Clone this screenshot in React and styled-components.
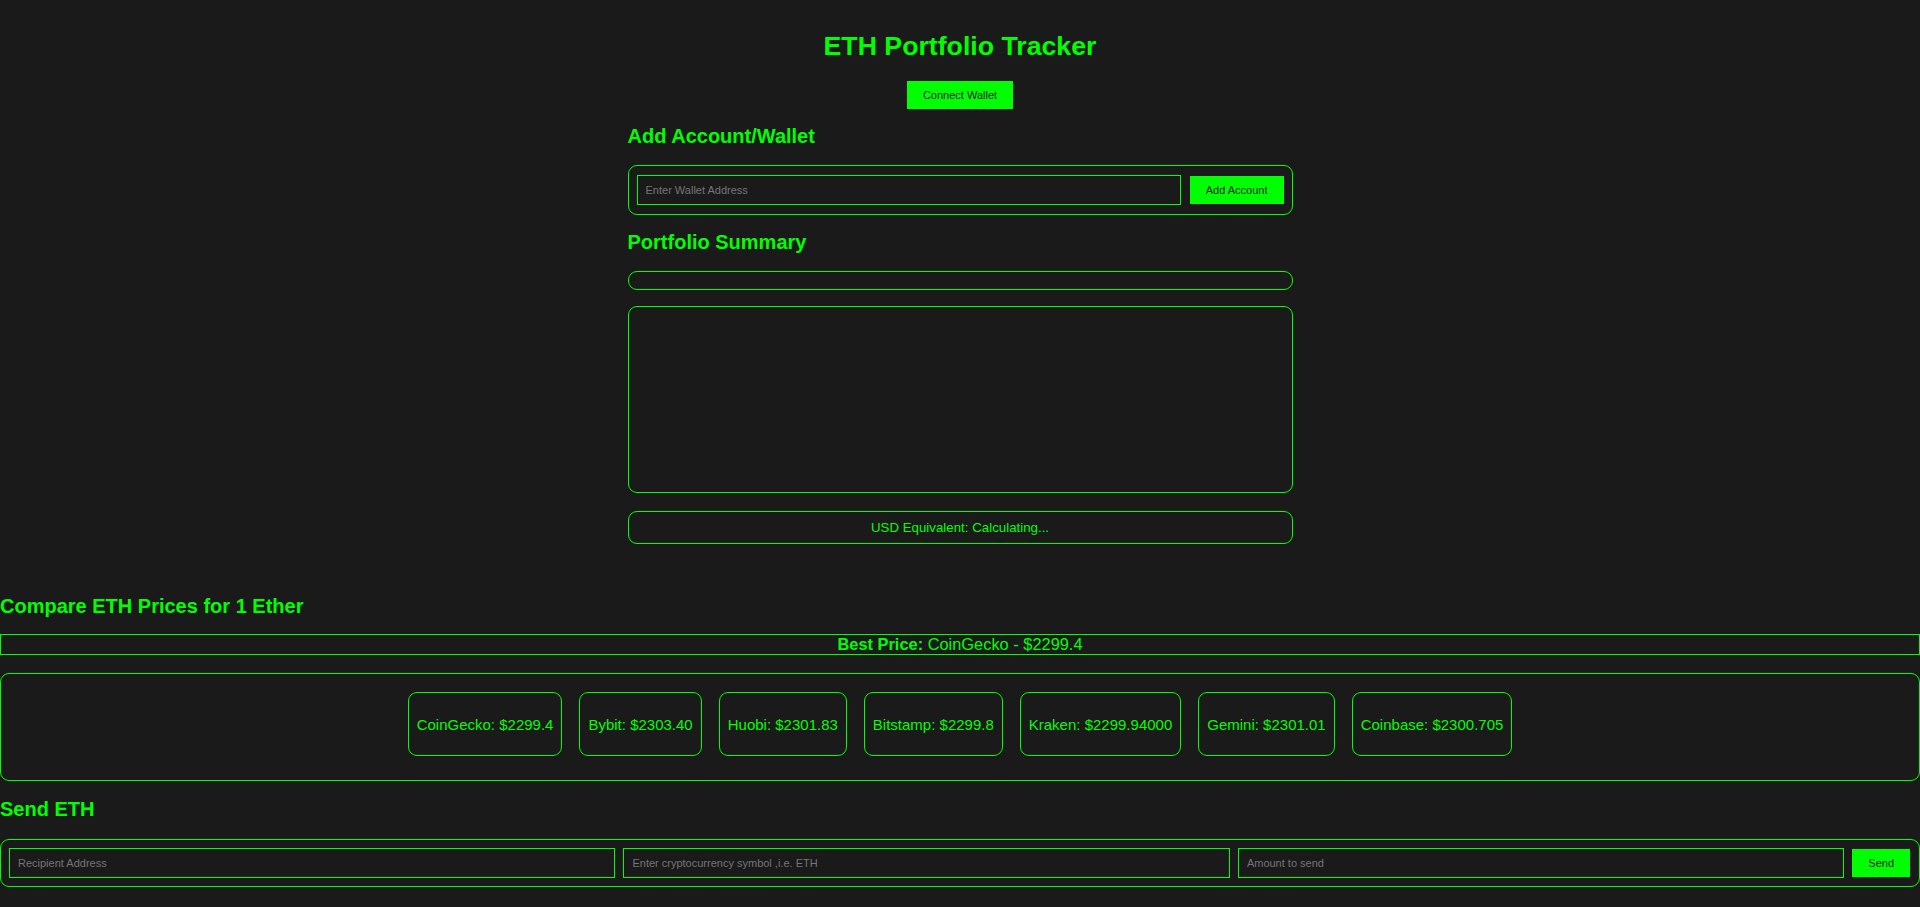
import React from 'react';
import styled, { createGlobalStyle } from 'styled-components';

const GlobalStyle = createGlobalStyle`
  body {
    margin: 0;
    background-color: #1a1a1a;
    color: #00ff00;
    font-family: "Liberation Sans", Arial, sans-serif;
  }
`;

const Page = styled.div`
  min-height: 907px;
  padding-top: 31px;
  box-sizing: border-box;
`;

const Container = styled.div`
  width: 665px;
  margin: 0 auto;
  display: flex;
  flex-direction: column;
`;

const Title = styled.h1`
  margin: 0;
  font-size: 26.7px;
  line-height: 30px;
  text-align: center;
`;

const GreenButton = styled.button`
  background-color: #00ff00;
  color: #1a1a1a;
  border: none;
  font-family: "Liberation Sans", Arial, sans-serif;
  font-size: 11px;
  height: 28px;
  padding: 0 16px;
  cursor: pointer;
  flex-shrink: 0;
`;

const ConnectButton = styled(GreenButton)`
  align-self: center;
  margin-top: 20px;
`;

const Heading = styled.h2`
  margin: ${(p) => p.$top || 16}px 0 ${(p) => p.$bottom || 17}px;
  font-size: 20px;
  line-height: 23px;
  font-weight: bold;
`;

const Card = styled.div`
  border: 1px solid #00ff00;
  border-radius: 9px;
  box-sizing: border-box;
  min-height: ${(p) => p.$height || 0}px;
  margin-bottom: ${(p) => p.$gap || 0}px;
`;

const InputRow = styled.div`
  display: flex;
  align-items: center;
  gap: 9px;
  padding: 9px 8px;
  border: 1px solid #00ff00;
  border-radius: 9px;
`;

const TextInput = styled.input`
  flex: 1;
  min-width: 0;
  height: 30px;
  box-sizing: border-box;
  background: #1a1a1a;
  border: 1px solid #00ff00;
  color: #00ff00;
  padding: 0 8px;
  font-family: "Liberation Sans", Arial, sans-serif;
  font-size: 11px;
  outline: none;
  &::placeholder {
    color: #757575;
  }
`;

const UsdCard = styled.div`
  border: 1px solid #00ff00;
  border-radius: 9px;
  padding: 8px;
  text-align: center;
  font-size: 13.3px;
  line-height: 15px;
`;

const BestPrice = styled.div`
  border: 1px solid #00ff00;
  text-align: center;
  font-size: 16.4px;
  line-height: 19px;
  margin-bottom: 18px;
`;

const PriceList = styled.div`
  display: flex;
  justify-content: center;
  gap: 17px;
  padding: 18px 10px 24px;
  border: 1px solid #00ff00;
  border-radius: 9px;
`;

const PriceCard = styled.div`
  height: 64px;
  box-sizing: border-box;
  display: flex;
  align-items: center;
  padding: 0 8px;
  border: 1px solid #00ff00;
  border-radius: 9px;
  font-size: 15px;
`;

const SendRow = styled(InputRow)`
  gap: 8px;
  padding: 8px 9px 8px 8px;
`;

const prices = [
  { name: 'CoinGecko', price: '2299.4' },
  { name: 'Bybit', price: '2303.40' },
  { name: 'Huobi', price: '2301.83' },
  { name: 'Bitstamp', price: '2299.8' },
  { name: 'Kraken', price: '2299.94000' },
  { name: 'Gemini', price: '2301.01' },
  { name: 'Coinbase', price: '2300.705' },
];

function App() {
  return (
    <Page>
      <GlobalStyle />
      <Container>
        <Title>ETH Portfolio Tracker</Title>
        <ConnectButton>Connect Wallet</ConnectButton>
        <Heading $top={16} $bottom={17}>Add Account/Wallet</Heading>
        <InputRow>
          <TextInput placeholder="Enter Wallet Address" />
          <GreenButton>Add Account</GreenButton>
        </InputRow>
        <Heading $top={16} $bottom={17}>Portfolio Summary</Heading>
        <Card $height={19} $gap={16} />
        <Card $height={187} $gap={18} />
        <UsdCard>USD Equivalent: Calculating...</UsdCard>
      </Container>
      <Heading $top={51} $bottom={16}>Compare ETH Prices for 1 Ether</Heading>
      <BestPrice>
        <b>Best Price:</b> CoinGecko - $2299.4
      </BestPrice>
      <PriceList>
        {prices.map((p) => (
          <PriceCard key={p.name}>
            {p.name}: ${p.price}
          </PriceCard>
        ))}
      </PriceList>
      <Heading $top={17} $bottom={18}>Send ETH</Heading>
      <SendRow>
        <TextInput placeholder="Recipient Address" />
        <TextInput placeholder="Enter cryptocurrency symbol ,i.e. ETH" />
        <TextInput placeholder="Amount to send" />
        <GreenButton>Send</GreenButton>
      </SendRow>
    </Page>
  );
}

export default App;
